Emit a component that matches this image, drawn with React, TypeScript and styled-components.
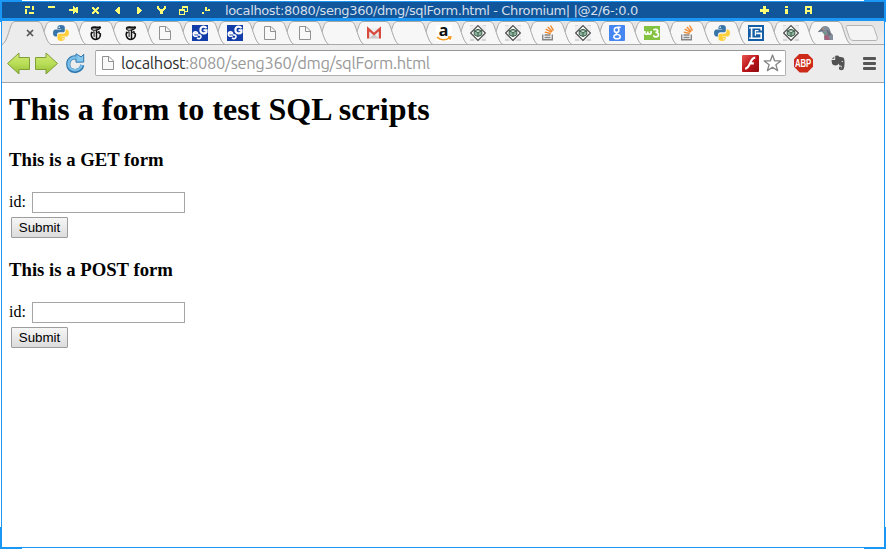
import React from "react";
import styled, { createGlobalStyle } from "styled-components";

const Global = createGlobalStyle`
  * { box-sizing: border-box; }
  body { margin: 0; background: #fff; overflow: hidden; }
  svg { display: block; overflow: visible; }
`;

const Desktop = styled.div`
  position: relative;
  width: 886px;
  height: 549px;
  padding: 1px;
  background: #fff;
`;

const Frame = styled.div`
  width: 884px;
  height: 547px;
  border: 1px solid #1a97f5;
  display: flex;
  flex-direction: column;
  background: #fff;
`;

const Corner = styled.div<{ $v: "top" | "bottom"; $h: "left" | "right" }>`
  position: absolute;
  width: 22px;
  height: 22px;
  ${(p) => p.$v}: 0;
  ${(p) => p.$h}: 0;
  border-${(p) => p.$v}: 2px solid #1a97f5;
  border-${(p) => p.$h}: 2px solid #1a97f5;
`;

const TitleBar = styled.header`
  flex: 0 0 19px;
  height: 19px;
  background: #11559b;
  border-bottom: 3px solid #1a97f5;
  display: flex;
  align-items: center;
`;

const TitleButtons = styled.div<{ $start: number; $gap: number }>`
  display: flex;
  gap: ${(p) => p.$gap}px;
  margin-left: ${(p) => p.$start}px;
`;

const Title = styled.div`
  width: 414px;
  margin-left: 15px;
  padding-top: 1px;
  white-space: pre;
  font: 13px/16px "DejaVu Sans", sans-serif;
  letter-spacing: -0.38px;
  color: #d3dfea;
`;

const TabStrip = styled.nav`
  flex: 0 0 24px;
  height: 24px;
  display: flex;
  background: linear-gradient(#e4e4e4, #ececec);
  border-bottom: 1px solid #a9a9a9;
  padding-left: 7px;
`;

const Tab = styled.div<{ $z: number }>`
  position: relative;
  flex: 0 0 34.77px;
  height: 24px;
  z-index: ${(p) => p.$z};
  display: flex;
  align-items: center;
  justify-content: center;
`;

const TabShape = styled.svg`
  position: absolute;
  left: -7px;
  top: 0;
`;

const TabIcon = styled.span<{ $active: boolean }>`
  display: flex;
  margin-left: ${(p) => (p.$active ? "7px" : "0")};
  z-index: 1;
`;

const NewTab = styled.svg`
  position: relative;
  flex: none;
  margin-left: 2px;
`;

const Toolbar = styled.div`
  flex: 0 0 38px;
  height: 38px;
  display: flex;
  align-items: center;
  background: #ececec;
  border-bottom: 1px solid #a5a5a5;
  padding: 0 8px 1px 5px;
`;

const Nav = styled.div`
  display: flex;
  align-items: center;
  gap: 5px;
  width: 88px;
`;

const ReloadButton = styled.span`
  margin-left: 2px;
`;

const AddressBar = styled.div`
  display: flex;
  align-items: center;
  width: 691px;
  height: 26px;
  padding: 0 3px 0 4px;
  border: 1px solid #b0b0b0;
  border-top: 1px solid #969696;
  border-radius: 2px;
  background: #fff;
`;

const Url = styled.div`
  flex: 1;
  margin-left: 5px;
  font: 16.5px/24px Ubuntu, "Noto Sans", sans-serif;
  letter-spacing: -0.32px;
  color: #999;
  white-space: nowrap;
`;

const Host = styled.span`
  color: #303030;
`;

const Actions = styled.div`
  display: flex;
  align-items: center;
  gap: 4px;
`;

const Extensions = styled.div`
  flex: 1;
  display: flex;
  align-items: center;
  justify-content: space-between;
  margin-left: 8px;
`;

const Page = styled.main`
  flex: 1;
  padding: 0 7px;
  font: 16px/18px "Liberation Serif", serif;
  color: #000;
`;

const Heading = styled.h1`
  margin: 8px 0 0;
  font-size: 32px;
  line-height: 37px;
  font-weight: bold;
  letter-spacing: 0.04px;
`;

const SubHeading = styled.h3`
  margin: 0;
  font-size: 18.72px;
  line-height: 21px;
`;

const FormBlock = styled.form<{ $top: number }>`
  margin-top: ${(p) => p.$top}px;
`;

const Field = styled.label`
  display: flex;
  align-items: flex-start;
  gap: 6px;
  height: 22px;
  margin-top: 21px;
  line-height: 21px;
`;

const Input = styled.input`
  width: 153px;
  height: 21px;
  margin: 1px 0 0;
  padding: 1px;
  border: 1px solid #a5a5a5;
  background: #fff;
  border-radius: 0;
`;

const Submit = styled.button`
  display: block;
  width: 57px;
  height: 21px;
  margin: 4px 0 0 2px;
  padding: 0;
  border: 1px solid #9d9d9d;
  border-radius: 1px;
  background: linear-gradient(#f6f6f6, #dcdcdc);
  font: 13.33px/17px "Liberation Sans", sans-serif;
  color: #000;
`;

const leftGlyphs: string[][] = [
  ["#####..##", "#####..##", ".......##", "##.....##", "##.......", "##.......", "##..#####", "##..#####", "........."],
  [".#######.", ".#######.", ".........", ".........", ".........", ".........", ".........", ".........", "........."],
  ["....#....", "....##.##", "....#####", "#########", "#########", "....#####", "....##.##", "....#....", "........."],
  [".........", ".##...##.", ".###.###.", "..#####..", "...###...", "..#####..", ".###.###.", ".##...##.", "........."],
  [".........", ".....##..", "....###..", "...####..", "..#####..", "...####..", "....###..", ".....##..", "........."],
  [".........", "..##.....", "..###....", "..####...", "..#####..", "..####...", "..###....", "..##.....", "........."],
  ["##.....##", "##.....##", "###...###", ".#######.", "..#####..", "...###...", "...###...", "...###...", "........."],
  ["...######", "...######", "...#....#", "######..#", "######..#", "#....####", "#....#...", "#....#...", "######..."],
  [".........", "....##...", "....##...", "....##.##", "....#####", ".........", ".##......", ".##......", "........."],
];

const rightGlyphs: string[][] = [
  ["...###...", "...###...", "...###...", "#########", "#########", "#########", "...###...", "...###...", "........."],
  ["...###...", "...###...", ".........", "...###...", "...###...", "...###...", "...###...", "...###...", "........."],
  [".#######.", ".#######.", ".##...##.", ".##...##.", ".#######.", ".#######.", ".##...##.", ".##...##.", "........."],
];

const PixelGlyph = ({ rows }: { rows: string[] }) => (
  <svg width="9" height="9" shapeRendering="crispEdges" fill="#ffff73">
    {rows.flatMap((row, y) =>
      [...row].map((c, x) => (c === "#" ? <rect key={`${x}-${y}`} x={x} y={y} width="1" height="1" /> : null)),
    )}
  </svg>
);

const Python = () => (
  <svg width="16" height="16" viewBox="0 0 16 16">
    <path fill="#3975a8" d="M8 0C5.3 0 4.5 1 4.5 2.4V4H8.3V4.6H2.5C1 4.6 0 6 0 8S1 11.5 2.4 11.5H4V9.6C4 8.3 5 7.3 6.3 7.3H10C11.1 7.3 11.8 6.4 11.8 5.4V2.4C11.8.8 10.3 0 8 0Z" />
    <path fill="#ffd03b" d="M8 16c2.7 0 3.7-1 3.7-2.4V12H8V11.4h5.5C15 11.4 16 10 16 8s-1-3.5-2.4-3.5h-1.1v1.8C12.5 7.7 11.4 8.7 10.1 8.7H6.3C5.2 8.7 4.5 9.5 4.5 10.6v3C4.5 15.2 5.8 16 8 16Z" />
    <circle cx="6.2" cy="2.3" r=".8" fill="#fff" /><circle cx="9.9" cy="13.7" r=".8" fill="#fff" />
  </svg>
);

const Times = () => (
  <svg width="16" height="16" viewBox="0 0 16 16" fill="none" stroke="#111">
    <path strokeWidth="2.2" d="M3.7 3.6C4.400.7 8 3.900 12.700 1.900" />
    <path strokeWidth="1.1" d="M3.500 3c-.3 2.400 2.200 2.500 4.500 2 2-.4 4.300-.5 4.600-2.800" />
    <path strokeWidth="1.500" d="M4.300 6.900C2.100 9 3.400 14.500 7.800 14.400c2.400 0 4.200-1.600 4.700-4.200" />
    <path strokeWidth="1.500" d="M8.500 4.800v9.200" />
    <path strokeWidth="1" d="M6.100 6.700v5.300M4 8l2.200-1.500M8.600 7.800 11 6.500" />
    <path strokeWidth="1.500" d="M11 6.200v1.900l1.400.8-.2 2" />
  </svg>
);

const Doc = () => (
  <svg width="16" height="16" viewBox="0 0 16 16" fill="#f9f9f9" stroke="#929292">
    <path d="M2.500 1.500H9L13.500 6v8.500h-11ZM8.500 1.500v5h5" />
  </svg>
);

const Eg = () => (
  <svg width="16" height="16" viewBox="0 0 16 16">
    <path fill="#123ca8" d="M0 0h16v16H0z" />
    <path fill="none" stroke="#fff" strokeWidth="2.1" d="M14.6 2.9C11.8.3 8.3 1.9 8.4 5.2c.1 3.400 4.300 4 6.100 2V5.300h-3" />
    <path fill="none" stroke="#fff" strokeWidth="1.6" d="M1.400 8.800h4.200C5.600 6.200 1.600 6.200 1.300 8.900c-.2 2.400 2.300 3 4.300 1.800M5 12.900c1.800 1.400 4.200.5 4-1.500-.2-1.400-1.600-1.700-2.800-1.100" />
  </svg>
);

const Gmail = () => (
  <svg width="16" height="16" viewBox="0 0 16 16">
    <path fill="#ededed" d="M1.5 3h13v10.5h-13z" />
    <path fill="#c9c9c9" d="M3 13.5 8 9l5 4.5z" />
    <path fill="none" stroke="#d84a3e" strokeWidth="2.2" d="M2.1 13.5V3.8L8 9l5.9-5.2v9.7" />
  </svg>
);

const Letter = styled.b`
  display: block;
  width: 16px;
  height: 12px;
  text-align: center;
  font: bold 16px/10px "Noto Sans", sans-serif;
  color: #111;
`;

const AmazonIcon = styled.span`
  display: block;
  width: 16px;
  height: 16px;
  background: #fff;
`;

const Amazon = () => (
  <AmazonIcon>
    <Letter>a</Letter>
    <svg width="16" height="4" viewBox="0 0 16 4" fill="none" stroke="#f79b20" strokeWidth="1.7">
      <path d="M1 .2C4.5 3.3 9.5 3.6 13.5.9M12 .1l2.7-.2-.6 2.7" />
    </svg>
  </AmazonIcon>
);

const Cube = () => (
  <svg width="16" height="16" viewBox="0 0 16 16">
    <path fill="#eee" d="M0 0h16v16H0z" />
    <path fill="#d5d5d5" d="M0 14h4v2H0zM12 14h4v2h-4zM0 0h3v1H0zM13 0h3v1h-3z" />
    <path fill="#fafafa" stroke="#484848" strokeWidth="1.1" d="M8 .6 15.4 8 8 15.400.6 8Z" />
    <path fill="#8fb49e" stroke="#3d5c4a" d="m4.200 5.800 3.800-1.500 3.800 1.500v4L8 11.500 4.200 9.800ZM4.200 5.900 8 7.500l3.800-1.600M8 7.500v4" />
  </svg>
);

const Stack = () => (
  <svg width="16" height="16" viewBox="0 0 16 16" fill="none">
    <path stroke="#858585" strokeWidth="1.4" d="M2.7 9.5v5.3h9.6V9.5M4.5 12.5h6M4.5 10h6" />
    <path stroke="#f18b32" strokeWidth="1.4" d="m4.8 7.1 6 1.4M5.7 4.2l5.8 3M7.8 1.9l4.5 4.5M10.5.5l3 5.2" />
  </svg>
);

const Google = () => (
  <svg width="16" height="16" viewBox="0 0 16 16" fill="none" stroke="#fff" strokeWidth="1.5">
    <rect width="16" height="16" rx="1" fill="#4686f3" stroke="none" />
    <ellipse cx="7.6" cy="4.900" rx="2.300" ry="2.500" />
    <path d="M11.700 2.300H8M8.700 7.100C6.600 7.700 7 8.800 8.700 9.400M8 9.400c-4.200.2-4.200 4.300 0 4.300s4.200-3.600.7-4.300" />
  </svg>
);

const W3 = () => (
  <svg width="16" height="16" viewBox="0 0 16 16" fill="none" stroke="#fff" strokeWidth="1.7">
    <path fill="#84c341" stroke="none" d="M0 1h16v14H0z" />
    <path d="M.8 6v1.700c0 2 3 2 3 0V6.600m0 1.100c0 2 3.300 2 3.300 0V6M9.300 4.800c4.800-1.300 6 1.800 2.200 2.700 4 0 4 4.700 0 4.300-1.200 0-1.800-.7-1.800-1.500" />
  </svg>
);

const Gbox = () => (
  <svg width="16" height="16" viewBox="0 0 16 16" fill="none" stroke="#fff" strokeWidth="1.6">
    <path fill="#155ea5" stroke="none" d="M0 0h16v16H0z" />
    <path d="M13.200 5.400V2.800H3.600v10.400h9.600V8.400H8.200" />
    <path strokeWidth="1.200" d="M7.400 5.500v5.300M7 5.600h3.500M1 2.800h2M1 13.200h2" />
  </svg>
);

const Pigeon = () => (
  <svg width="17" height="16" viewBox="0 0 17 16">
    <path fill="#858e9b" d="M3.500 4.500C4 2 6.200.8 8.600 1c3.400.3 4.500 3 5.200 6.400L16 10v5H7l.5-5L5.500 7.500Z" />
    <path fill="#68727f" d="M4.500 3.500 1 6.500l.6.700L6.500 6ZM9.500 4.500l3 1.500 1.800 4-3 1Z" />
    <path fill="#a4627d" d="m8 9 3 1.500L13 15H8.500L7 12Z" />
    <path fill="#6b9684" d="m6.500 7 3 .5-.5 3-1.500-.5Z" />
    <circle cx="6.3" cy="3.8" r=".7" fill="#db8849" />
  </svg>
);

const Close = () => (
  <svg width="8" height="8" viewBox="0 0 8 8" stroke="#555" strokeWidth="1.7"><path d="m1 1 6 6m0-6L1 7" /></svg>
);

const Empty = () => null;
const tabIcons = [Close, Python, Times, Times, Doc, Eg, Eg, Doc, Doc, Empty, Gmail, Empty, Amazon, Cube, Cube, Stack, Cube, Google, W3, Stack, Python, Gbox, Cube, Pigeon];

const Arrow = ({ flip = false }: { flip?: boolean }) => (
  <svg width="23" height="23" viewBox="0 0 23 23">
    <defs>
      <linearGradient id="leaf" x2="0" y2="1"><stop stopColor="#d5e873" /><stop offset=".5" stopColor="#b9de58" /><stop offset="1" stopColor="#96bd36" /></linearGradient>
    </defs>
    <path transform={flip ? "translate(23 0) scale(-1 1)" : undefined} fill="url(#leaf)" stroke="#7f9f38" d="M.5 11.500 12 1v4.500h10.500v12H12V22Z" />
  </svg>
);

const Reload = () => (
  <svg width="20" height="21" viewBox="0 0 20 21">
    <path fill="none" stroke="#2f76ad" strokeWidth="4.200" d="M12.500 5C7 3 3.300 6.600 3.200 11.300c.1 8.700 12.500 9 14.100.700" />
    <path fill="#86c8ee" stroke="#2f76ad" d="M11 .8v8.400l7.700-.1V1.300l-2.600 2.600Z" />
    <path fill="none" stroke="#78bde8" strokeWidth="2.500" d="M13 5.200C7.700 3.200 3.500 6.700 3.500 11.300c.2 7.600 11.500 8 13.300.7" />
  </svg>
);

const Flash = () => (
  <svg width="17" height="17" viewBox="0 0 18 18">
    <defs><linearGradient id="flash" x2="1" y2="1"><stop stopColor="#e85650" /><stop offset=".5" stopColor="#bc151b" /><stop offset="1" stopColor="#8e0b10" /></linearGradient></defs>
    <rect width="18" height="18" rx="1" fill="url(#flash)" />
    <path fill="none" stroke="#fff" strokeWidth="2.3" d="M14 2.800C8 3 9.200 13.900 3.300 14.500M8 8.800h4.500" />
  </svg>
);

const Star = () => (
  <svg width="19" height="18" viewBox="0 0 20 19"><path fill="#fff" stroke="#858585" strokeWidth="1.4" strokeLinejoin="round" d="m10 1.100 2.200 6 6.500.2-5.100 4 1.800 6.300L10 14l-5.400 3.600 1.800-6.300-5.100-4 6.500-.2Z" /></svg>
);

const Abp = styled.div`
  width: 19px;
  height: 19px;
  clip-path: polygon(30% 0, 70% 0, 100% 30%, 100% 70%, 70% 100%, 30% 100%, 0 70%, 0 30%);
  background: #cd2a19;
  color: #fff;
  display: flex;
  justify-content: center;
`;

const AbpText = styled.span`
  font: bold 10.5px/19px "Liberation Sans", sans-serif;
  transform: scaleX(0.74);
`;

const Elephant = () => (
  <svg width="15" height="16" viewBox="0 0 15 16">
    <path fill="#515151" d="M4.2.8 7 .6l1.200 1.100 4 .8c2 1.400 1.600 9.400.3 11.800-.6 1.200-4.400 1.400-4.600-.8-.2-2 1.800-2.400 2.700-1.600v1h-1c-.1.7 1 .8 1.300-.3.400-1.500-.2-2.200-2.400-2L7.500 8.500c-.4 2.700-5.600 2.500-6.500 0L.5 5h3.700Z" />
    <path fill="#777" d="M3.300 1.200v2.900H.8Z" /><path fill="#eee" d="M10.200 6.200c1.500-.7 2 .2 1.800 1Z" />
  </svg>
);

const Menu = () => (
  <svg width="13" height="13" fill="#565656"><rect width="13" height="3" rx="1" /><rect y="5" width="13" height="3" rx="1" /><rect y="10" width="13" height="3" rx="1" /></svg>
);

const SqlForm = ({ method, top }: { method: string; top: number }) => (
  <FormBlock $top={top} onSubmit={(e) => e.preventDefault()}>
    <SubHeading>This is a {method} form</SubHeading>
    <Field>id: <Input name="id" /></Field>
    <Submit type="submit">Submit</Submit>
  </FormBlock>
);

export default function App() {
  return (
    <Desktop>
      <Global />
      <Frame>
        <TitleBar>
          <TitleButtons $start={23} $gap={13}>{leftGlyphs.map((g, i) => <PixelGlyph key={i} rows={g} />)}</TitleButtons>
          <Title>localhost:8080/seng360/dmg/sqlForm.html - Chromium| |@2/6-:0.0</Title>
          <TitleButtons $start={121} $gap={13}>{rightGlyphs.map((g, i) => <PixelGlyph key={i} rows={g} />)}</TitleButtons>
        </TitleBar>
        <TabStrip>
          {tabIcons.map((Icon, i) => (
            <Tab key={i} $z={30 - i}>
              <TabShape width="48" height="24" viewBox="0 0 48 24">
                <path fill={i ? "#f7f7f7" : "#ececec"} d="M0 23.5C4 22 6 13 8.5 6 10 2 11 .5 14 .5h21c3 0 4 1.5 5.5 5.5C43 13 45 22 49 23.5V24H0Z" />
                <path fill="none" stroke="#a6a6a6" d="M0 23.5C4 22 6 13 8.5 6 10 2 11 .5 14 .5h21c3 0 4 1.5 5.5 5.5C43 13 45 22 49 23.5" />
                {i > 0 && <path stroke="#a9a9a9" d="M0 23.5h49" />}
              </TabShape>
              <TabIcon $active={i === 0}><Icon /></TabIcon>
            </Tab>
          ))}
          <NewTab width="34" height="24" viewBox="0 0 34 24">
            <path fill="#f4f4f4" stroke="#b3b3b3" d="M3 4.500h22c3 0 3.500 1 4.500 4l2.500 7c1 3 0 4-2 4H9c-3 0-4-1-5-4L1.500 8C.5 5.500 1 4.500 3 4.500Z" />
          </NewTab>
        </TabStrip>
        <Toolbar>
          <Nav><Arrow /><Arrow flip /><ReloadButton><Reload /></ReloadButton></Nav>
          <AddressBar>
            <Doc />
            <Url><Host>localhost</Host>:8080/seng360/dmg/sqlForm.html</Url>
            <Actions><Flash /><Star /></Actions>
          </AddressBar>
          <Extensions><Abp><AbpText>ABP</AbpText></Abp><Elephant /><Menu /></Extensions>
        </Toolbar>
        <Page>
          <Heading>This a form to test SQL scripts</Heading>
          <SqlForm method="GET" top={21} />
          <SqlForm method="POST" top={21} />
        </Page>
      </Frame>
      <Corner $v="top" $h="left" />
      <Corner $v="top" $h="right" />
      <Corner $v="bottom" $h="left" />
      <Corner $v="bottom" $h="right" />
    </Desktop>
  );
}
